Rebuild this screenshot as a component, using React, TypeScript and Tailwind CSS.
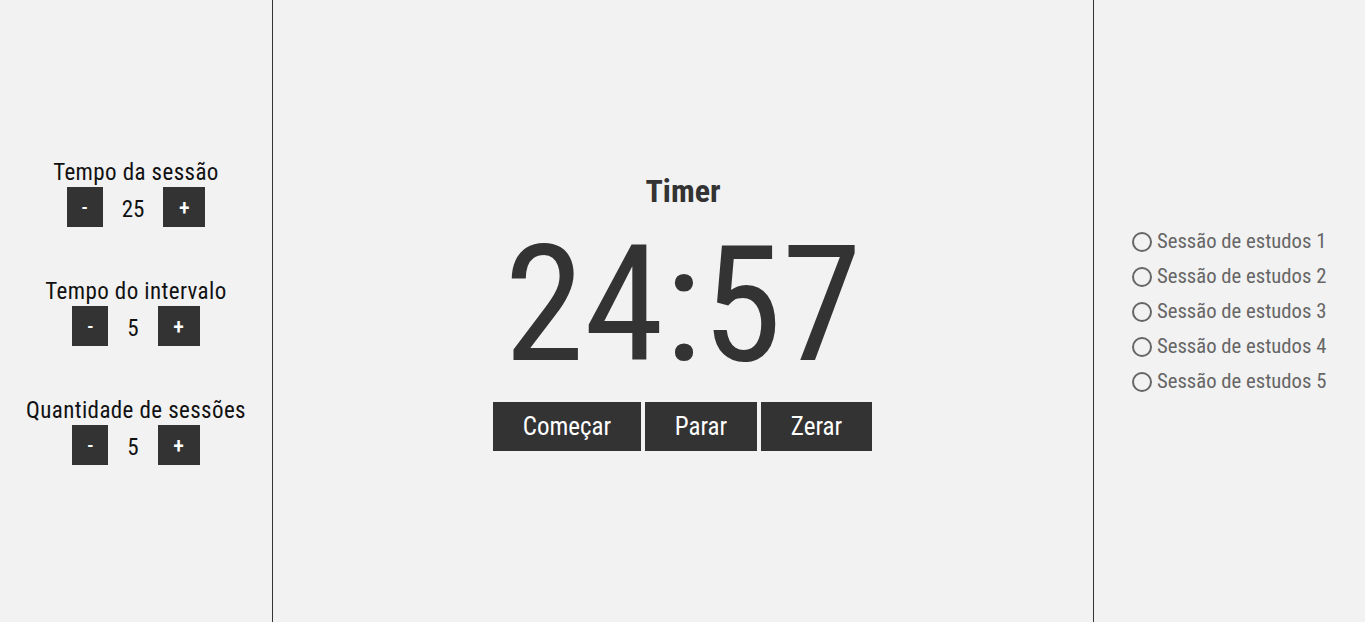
import React from "react";

function Stepper({ label, value }: { label: string; value: string }) {
  return (
    <div className="flex flex-col items-center">
      <div className="text-[23px] leading-[26px] tracking-[0.4px] text-[#111]">{label}</div>
      <div className="mt-[1px] flex items-center">
        <button className="flex h-[40px] w-[36px] items-center justify-center bg-[#333] text-[20px] font-medium text-white">-</button>
        <span className="px-[19px] pt-[5px] text-[23px] leading-[26px] text-[#111]">{value}</span>
        <button className="flex h-[40px] w-[42px] items-center justify-center bg-[#333] text-[22px] font-medium text-white">+</button>
      </div>
    </div>
  );
}

export default function App() {
  const sessions = [1, 2, 3, 4, 5];
  return (
    <div
      className="flex h-[622px] w-full bg-[#f2f2f2] [font-stretch:condensed]"
      style={{ fontFamily: "Roboto, 'Liberation Sans', sans-serif" }}
    >
      <div className="flex w-[273px] flex-col items-center justify-center gap-[52px] border-r border-[#333] pt-[3px]">
        <Stepper label="Tempo da sessão" value="25" />
        <Stepper label="Tempo do intervalo" value="5" />
        <Stepper label="Quantidade de sessões" value="5" />
      </div>
      <div className="flex flex-1 flex-col items-center justify-center">
        <div className="text-[32px] font-bold leading-[40px] text-[#333]">Timer</div>
        <div className="text-[162px] leading-[189px] text-[#333]">24:57</div>
        <div className="mt-[2px] flex gap-[4px] pr-[1px]">
          <button className="h-[49px] w-[148px] bg-[#333] text-[25px] text-white">Começar</button>
          <button className="h-[49px] w-[112px] bg-[#333] text-[25px] text-white">Parar</button>
          <button className="h-[49px] w-[111px] bg-[#333] text-[25px] text-white">Zerar</button>
        </div>
      </div>
      <div className="flex w-[272px] flex-col justify-center border-l border-[#333] pl-[38px] pt-[2px]">
        {sessions.map((n) => (
          <div key={n} className="flex h-[35px] items-center">
            <span className="mr-[5px] h-[20px] w-[20px] rounded-full border-2 border-[#666]"></span>
            <span className="text-[20.7px] text-[#666]">Sessão de estudos {n}</span>
          </div>
        ))}
      </div>
    </div>
  );
}
